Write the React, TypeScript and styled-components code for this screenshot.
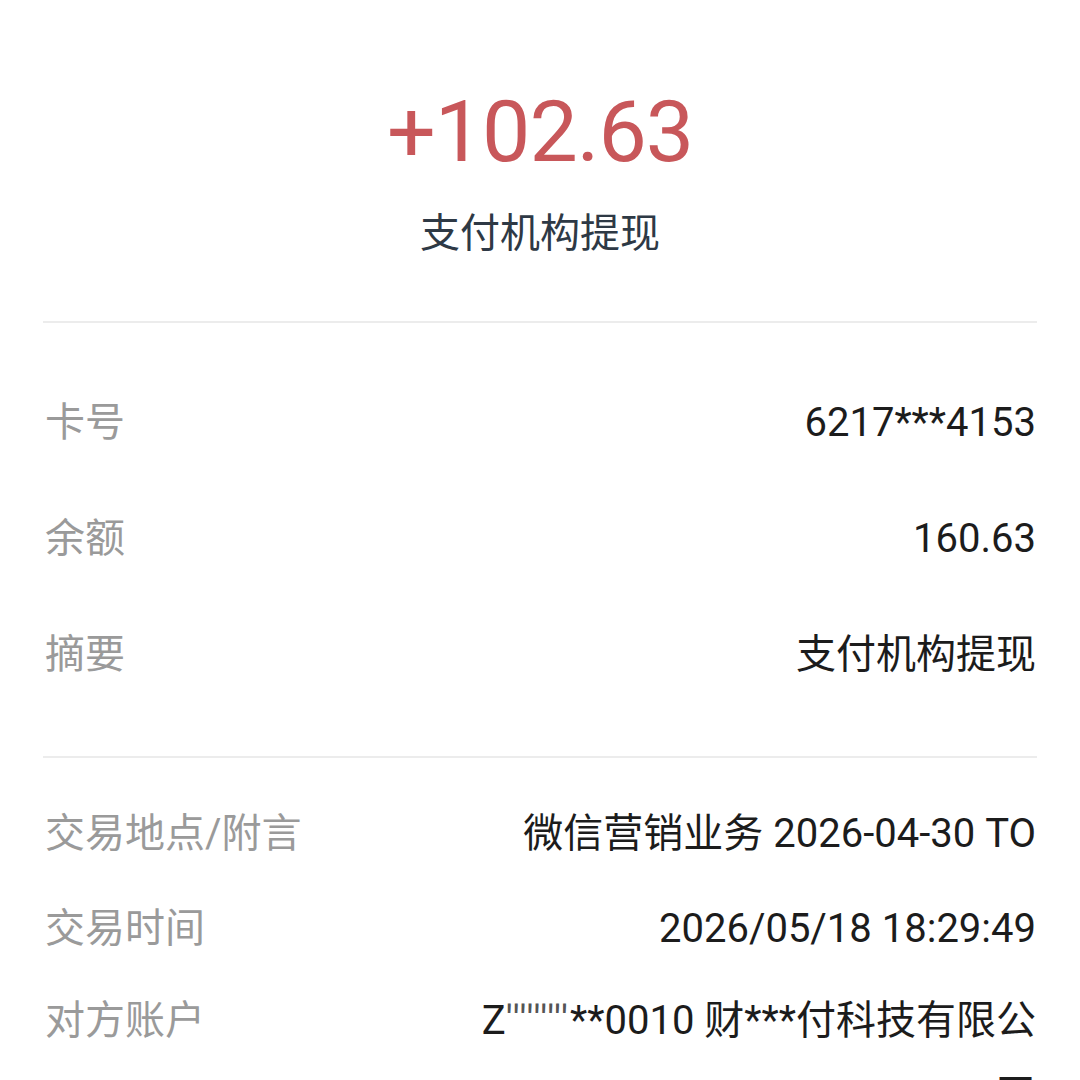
import React from "react";
import styled, { createGlobalStyle } from "styled-components";

const Global = createGlobalStyle`
  html, body { margin: 0; padding: 0; background: #ffffff; }
  body { font-family: Roboto, "Noto Sans CJK SC", sans-serif; }
`;

const Page = styled.div`
  width: 1080px;
  height: 1080px;
  overflow: hidden;
  background: #ffffff;
  padding: 0 43px;
  box-sizing: border-box;
`;

const Header = styled.header`
  display: flex;
  flex-direction: column;
  align-items: center;
  padding: 89px 0 71px;
`;

const Amount = styled.div`
  font-family: Roboto, sans-serif;
  font-size: 86px;
  line-height: 1;
  letter-spacing: -1px;
  color: #c8575a;
`;

const Subtitle = styled.div`
  margin-top: 35px;
  font-family: "Noto Sans CJK SC", sans-serif;
  font-size: 40px;
  line-height: 1;
  color: #2e3945;
`;

const Divider = styled.hr`
  margin: 0;
  border: none;
  height: 2px;
  background: #ececec;
`;

const Section = styled.section<{ $top: number; $bottom: number }>`
  display: flex;
  flex-direction: column;
  padding: ${(p) => p.$top}px 1px ${(p) => p.$bottom}px 2px;
`;

const Row = styled.div<{ $lh: number; $pad: number; $padTop?: number }>`
  display: flex;
  justify-content: space-between;
  align-items: flex-start;
  padding: ${(p) => p.$padTop ?? p.$pad}px 0 ${(p) => p.$pad}px;
  font-size: 40px;
  line-height: ${(p) => p.$lh}px;
`;

const Label = styled.div`
  font-family: Roboto, "Noto Sans CJK SC", sans-serif;
  color: #9a9a9a;
  white-space: nowrap;
`;

const Value = styled.div`
  font-family: Roboto, "Noto Sans CJK SC", sans-serif;
  color: #1c1c1c;
  text-align: right;
  max-width: 580px;
`;

const Ticks = styled.span`
  letter-spacing: 2px;
  color: #555;
`;

const topRows = [
  { label: "卡号", value: "6217***4153" },
  { label: "余额", value: "160.63" },
  { label: "摘要", value: "支付机构提现" },
];

export default function App() {
  return (
    <>
      <Global />
      <Page>
        <Header>
          <Amount>+102.63</Amount>
          <Subtitle>支付机构提现</Subtitle>
        </Header>
        <Divider />
        <Section $top={42} $bottom={43}>
          {topRows.map((r) => (
            <Row key={r.label} $lh={40} $pad={38}>
              <Label>{r.label}</Label>
              <Value>{r.value}</Value>
            </Row>
          ))}
        </Section>
        <Divider />
        <Section $top={28} $bottom={0}>
          <Row $lh={74} $pad={10.5}>
            <Label>交易地点/附言</Label>
            <Value>微信营销业务 2026-04-30 TO</Value>
          </Row>
          <Row $lh={74} $pad={10.5}>
            <Label>交易时间</Label>
            <Value>2026/05/18 18:29:49</Value>
          </Row>
          <Row $lh={74} $pad={10.5} $padTop={7.5}>
            <Label>对方账户</Label>
            <Value>
              Z<Ticks>'''''''''</Ticks>**0010 财***付科技有限公司
            </Value>
          </Row>
        </Section>
      </Page>
    </>
  );
}
